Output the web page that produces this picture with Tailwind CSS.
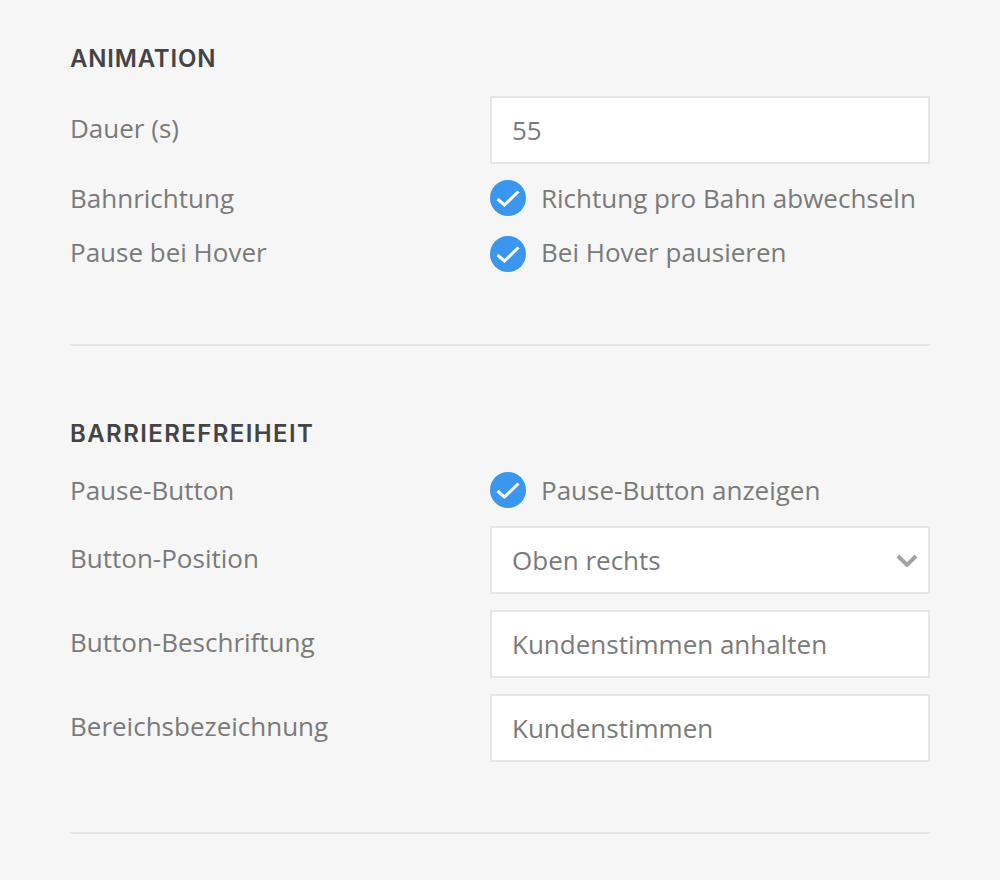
<!DOCTYPE html>
<html lang="de">
<head>
	<meta charset="UTF-8">
	<title>Einstellungen</title>
	<script src="https://cdn.jsdelivr.net/npm/@tailwindcss/browser@4"></script>
</head>
<body class="bg-[#f6f6f6] font-['Open_Sans',sans-serif] text-[26px] leading-[36px] text-[#7a7a7a]">
	<main class="w-[1000px] h-[880px] overflow-hidden px-[70px] pt-[41px]">
		<!-- Animation -->
		<section class="border-b-2 border-[#e5e5e5] h-[305px]">
			<h2 class="font-['Inter',sans-serif] font-semibold text-[24px] leading-[36px] tracking-[0.8px] text-[#444444]">ANIMATION</h2>
			<div class="grid grid-cols-[420px_440px] mt-[19px]">
				<div class="leading-[64px] h-[68px]">Dauer (s)</div>
				<div class="h-[68px] border-2 border-[#e5e5e5] bg-white px-[20px] leading-[64px]">55</div>
			</div>
			<div class="grid grid-cols-[420px_440px] mt-[16px]">
				<div>Bahnrichtung</div>
				<div class="flex items-center gap-[15px]">
					<svg class="w-[36px] h-[36px]" viewBox="0 0 36 36"><circle cx="18" cy="18" r="18" fill="#3b96ee"/><path d="M7.5 19l7 6L28.5 11.5" fill="none" stroke="#fff" stroke-width="3"/></svg>
					<span>Richtung pro Bahn abwechseln</span>
				</div>
			</div>
			<div class="grid grid-cols-[420px_440px] mt-[18px]">
				<div>Pause bei Hover</div>
				<div class="flex items-center gap-[15px]">
					<svg class="w-[36px] h-[36px] translate-y-[2px]" viewBox="0 0 36 36"><circle cx="18" cy="18" r="18" fill="#3b96ee"/><path d="M7.5 19l7 6L28.5 11.5" fill="none" stroke="#fff" stroke-width="3"/></svg>
					<span>Bei Hover pausieren</span>
				</div>
			</div>
		</section>

		<!-- Barrierefreiheit -->
		<section class="border-b-2 border-[#e5e5e5] h-[488px] pt-[70px]">
			<h2 class="font-['Inter',sans-serif] font-semibold text-[24px] leading-[36px] tracking-[1.4px] text-[#444444]">BARRIEREFREIHEIT</h2>
			<div class="grid grid-cols-[420px_440px] mt-[20px]">
				<div>Pause-Button</div>
				<div class="flex items-center gap-[15px]">
					<svg class="w-[36px] h-[36px]" viewBox="0 0 36 36"><circle cx="18" cy="18" r="18" fill="#3b96ee"/><path d="M7.5 19l7 6L28.5 11.5" fill="none" stroke="#fff" stroke-width="3"/></svg>
					<span>Pause-Button anzeigen</span>
				</div>
			</div>
			<div class="grid grid-cols-[420px_440px] mt-[18px]">
				<div class="leading-[64px] h-[68px]">Button-Position</div>
				<div class="h-[68px] border-2 border-[#e5e5e5] bg-white pl-[20px] pr-[10px] leading-[64px] flex items-center justify-between">
					<span>Oben rechts</span>
					<svg class="w-[22px] h-[14px]" viewBox="0 0 22 14"><path d="M2 3l9 9 9-9" fill="none" stroke="#a3a3a3" stroke-width="4"/></svg>
				</div>
			</div>
			<div class="grid grid-cols-[420px_440px] mt-[16px]">
				<div class="leading-[64px] h-[68px]">Button-Beschriftung</div>
				<div class="h-[68px] border-2 border-[#e5e5e5] bg-white px-[20px] leading-[64px]">Kundenstimmen anhalten</div>
			</div>
			<div class="grid grid-cols-[420px_440px] mt-[16px]">
				<div class="leading-[64px] h-[68px]">Bereichsbezeichnung</div>
				<div class="h-[68px] border-2 border-[#e5e5e5] bg-white px-[20px] leading-[64px]">Kundenstimmen</div>
			</div>
		</section>
	</main>
</body>
</html>
